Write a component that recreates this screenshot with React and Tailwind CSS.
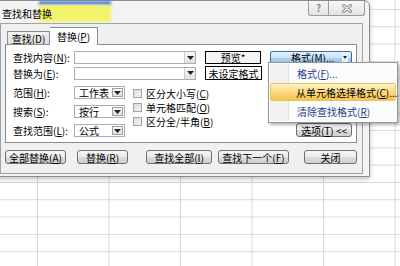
import React from 'react';

// Excel "查找和替换" dialog, Replace tab, with the 格式 dropdown open.

const FONT = "font-['Noto_Sans_CJK_SC','Noto_Sans',sans-serif]";

function K({ c }) {
  return <span className="underline">{c}</span>;
}

function Combo({ w = 'w-[122px]', text }) {
  return (
    <div className={`flex h-[13px] ${w} items-stretch border border-[#abadb3] bg-white`}>
      <div className="flex-1 pl-[4px] text-[10px] leading-[11px] text-black">{text}</div>
      <div className="flex w-[11px] items-center justify-center border-l border-[#c9ccd1] bg-[linear-gradient(#f8f8f8,#e2e2e2)]">
        <svg width="7" height="4" viewBox="0 0 7 4"><path d="M0 0h7L3.5 4z" fill="#222" /></svg>
      </div>
    </div>
  );
}

function Select({ text }) {
  return (
    <div className="flex h-[13px] w-[51px] items-stretch border border-[#abadb3] bg-white">
      <div className="flex-1 whitespace-nowrap pl-[4px] text-[10px] leading-[11px] text-black">{text}</div>
      <div className="my-[1px] mr-[1px] flex w-[11px] items-center justify-center border border-[#9da1a7] bg-[linear-gradient(#fafafa,#dedede)]">
        <svg width="7" height="4" viewBox="0 0 7 4"><path d="M0 0h7L3.5 4z" fill="#222" /></svg>
      </div>
    </div>
  );
}

function Check({ children }) {
  return (
    <div className="flex h-[14px] items-center gap-[4px]">
      <div className="h-[9px] w-[9px] border border-[#a3a3a3] bg-[linear-gradient(135deg,#dcdcdc,#f4f4f4)]" />
      <span className="whitespace-nowrap text-[10px] leading-[11px] text-black">{children}</span>
    </div>
  );
}

function Btn({ w, children, className = '' }) {
  return (
    <div
      className={`flex h-[14px] ${w} items-center justify-center whitespace-nowrap rounded-[3px] border border-[#707070] bg-[linear-gradient(#f6f6f6_0%,#ebebeb_50%,#dddddd_51%,#cfcfcf_100%)] text-[10px] leading-[11px] text-black ${className}`}
    >
      {children}
    </div>
  );
}

function Label({ children }) {
  return <div className="w-[61px] whitespace-nowrap text-[10px] leading-[11px] text-black">{children}</div>;
}

function Dialog() {
  return (
    <div className="absolute left-[-6px] top-0 flex h-[177px] w-[376px] flex-col rounded-t-[6px] border border-[#8a8a8a] bg-[#f1f3f5] shadow-[0_2px_5px_rgba(0,0,0,0.25)]">
      {/* title bar */}
      <div className="relative flex h-[22px] items-start">
        <div className="absolute left-[44px] top-0 h-[4px] w-[72px] bg-[#5c8ad6] blur-[1px]" />
        <div className="absolute left-[44px] top-[4px] h-[17px] w-[72px] bg-[#f3f36e] blur-[1px]" />
        <div className="relative ml-[7px] mt-[7px] text-[10px] leading-[11px] text-black">查找和替换</div>
        <div className="relative ml-auto mr-[4px] flex">
          <div className="flex h-[15px] w-[21px] items-center justify-center rounded-bl-[3px] border border-t-0 border-[#9a9a9a] bg-[linear-gradient(#f7f7f7,#e4e4e4)] text-[10px] font-bold leading-[10px] text-[#8a8a8a]">
            ?
          </div>
          <div className="flex h-[15px] w-[36px] items-center justify-center rounded-br-[3px] border border-l-0 border-t-0 border-[#9a9a9a] bg-[linear-gradient(#f7f7f7,#e4e4e4)]">
            <svg width="10" height="9" viewBox="0 0 10 9">
              <path d="M1.5 1.5l7 6M8.5 1.5l-7 6" stroke="#8a8a8a" strokeWidth="3" strokeLinecap="round" />
              <path d="M1.5 1.5l7 6M8.5 1.5l-7 6" stroke="#f4f4f4" strokeWidth="1.2" strokeLinecap="round" />
            </svg>
          </div>
        </div>
      </div>

      {/* client area */}
      <div className="ml-[5px] flex h-[151px] w-[363px] flex-col border border-[#9ea3a9] bg-[#f0f0f0]">
        {/* tabs */}
        <div className="ml-[6px] mt-[3px] flex h-[17px] items-end">
          <div className="flex h-[13px] w-[43px] items-center justify-center whitespace-nowrap border border-b-0 border-[#898c95] bg-[linear-gradient(#f3f3f3,#dcdcdc)] text-[10px] leading-[11px] text-black">
            查找(<K c="D" />)
          </div>
          <div className="relative z-10 -mb-px flex h-[18px] w-[48px] items-center justify-center whitespace-nowrap border border-b-0 border-l-0 border-[#898c95] bg-white text-[10px] leading-[11px] text-black">
            替换(<K c="P" />)
          </div>
        </div>

        {/* tab pane */}
        <div className="ml-[4px] flex h-[99px] w-[352px] flex-col border border-[#898c95] bg-white pl-[7px] pt-[6px]">
          <div className="flex items-center">
            <Label>查找内容(<K c="N" />):</Label>
            <Combo />
            <div className="ml-[9px] flex h-[13px] w-[56px] items-center justify-center border border-black bg-[#f4f4f4] text-[10px] leading-[11px] text-black">
              预览*
            </div>
            <div className="ml-[9px] flex h-[13px] w-[82px] items-center whitespace-nowrap rounded-[2px] border border-[#3c6d99] bg-[linear-gradient(#e4f1fc_0%,#c9e2f8_50%,#a9d1f3_51%,#98c6ef_100%)] pl-[20px] text-[10px] leading-[11px] text-black">
              <span>格式(<K c="M" />)...</span>
              <span className="ml-auto mr-[3px] flex h-[9px] w-[6px] items-center justify-center bg-[#e8f2fb]">
                <svg width="4" height="3" viewBox="0 0 4 3"><path d="M0 0h4L2 3z" fill="#222" /></svg>
              </span>
            </div>
          </div>
          <div className="mt-[2px] flex items-center">
            <Label>替换为(<K c="E" />):</Label>
            <Combo />
            <div className="ml-[9px] flex h-[14px] w-[57px] items-center justify-center whitespace-nowrap border border-black bg-white text-[10px] leading-[11px] text-black">
              未设定格式
            </div>
          </div>

          <div className="mt-[6px] flex">
            <div className="flex flex-col gap-[6px]">
              <div className="flex items-center">
                <Label>范围(<K c="H" />):</Label>
                <Select text="工作表" />
              </div>
              <div className="flex items-center">
                <Label>搜索(<K c="S" />):</Label>
                <Select text="按行" />
              </div>
              <div className="flex items-center">
                <Label>查找范围(<K c="L" />):</Label>
                <Select text="公式" />
              </div>
            </div>
            <div className="ml-[8px] flex flex-col">
              <Check>区分大小写(<K c="C" />)</Check>
              <Check>单元格匹配(<K c="O" />)</Check>
              <Check>区分全/半角(<K c="B" />)</Check>
            </div>
            <Btn w="w-[56px]" className="ml-auto mr-[4px] h-[13px] self-end">
              选项(<K c="T" />) &lt;&lt;
            </Btn>
          </div>
        </div>

        {/* bottom buttons */}
        <div className="mt-[7px] flex">
          <Btn w="w-[61px]" className="ml-[4px]">全部替换(<K c="A" />)</Btn>
          <Btn w="w-[51px]" className="ml-[11px]">替换(<K c="R" />)</Btn>
          <Btn w="w-[66px]" className="ml-[18px]">查找全部(<K c="I" />)</Btn>
          <Btn w="w-[71px]" className="ml-[6px]">查找下一个(<K c="F" />)</Btn>
          <Btn w="w-[53px]" className="ml-[15px]">关闭</Btn>
        </div>
      </div>
    </div>
  );
}

function FormatMenu() {
  return (
    <div className="absolute left-[268px] top-[62px] flex h-[61px] w-[130px] flex-col whitespace-nowrap border border-[#979797] bg-[#fcfcfc] p-[1px] shadow-[2px_2px_3px_rgba(0,0,0,0.3)]">
      <div className="absolute bottom-[1px] left-[1px] top-[1px] w-[19px] border-r border-[#e2e3e3] bg-[#f1f1f1]" />
      <div className="relative flex h-[19px] items-center pl-[27px] text-[10px] leading-[11px] text-[#1f3c88]">
        格式(<K c="F" />)...
      </div>
      <div className="relative flex h-[19px] items-center rounded-[2px] border border-[#e5c365] bg-[linear-gradient(#fff3c8,#fbd97c_50%,#f6c34f)] pl-[25px] text-[10px] leading-[11px] text-black">
        从单元格选择格式(<K c="C" />)...
      </div>
      <div className="relative flex h-[20px] items-center pl-[27px] text-[10px] leading-[11px] text-[#1f3c88]">
        清除查找格式(<K c="R" />)
      </div>
    </div>
  );
}

export default function App() {
  return (
    <div
      className={`relative h-[266px] w-[400px] overflow-hidden bg-white bg-[linear-gradient(to_right,#d8d8d8_1px,transparent_1px),linear-gradient(to_bottom,#d8d8d8_1px,transparent_1px)] [background-position:37px_9px] [background-size:71.5px_17.3px] ${FONT}`}
    >
      <Dialog />
      <FormatMenu />
    </div>
  );
}
